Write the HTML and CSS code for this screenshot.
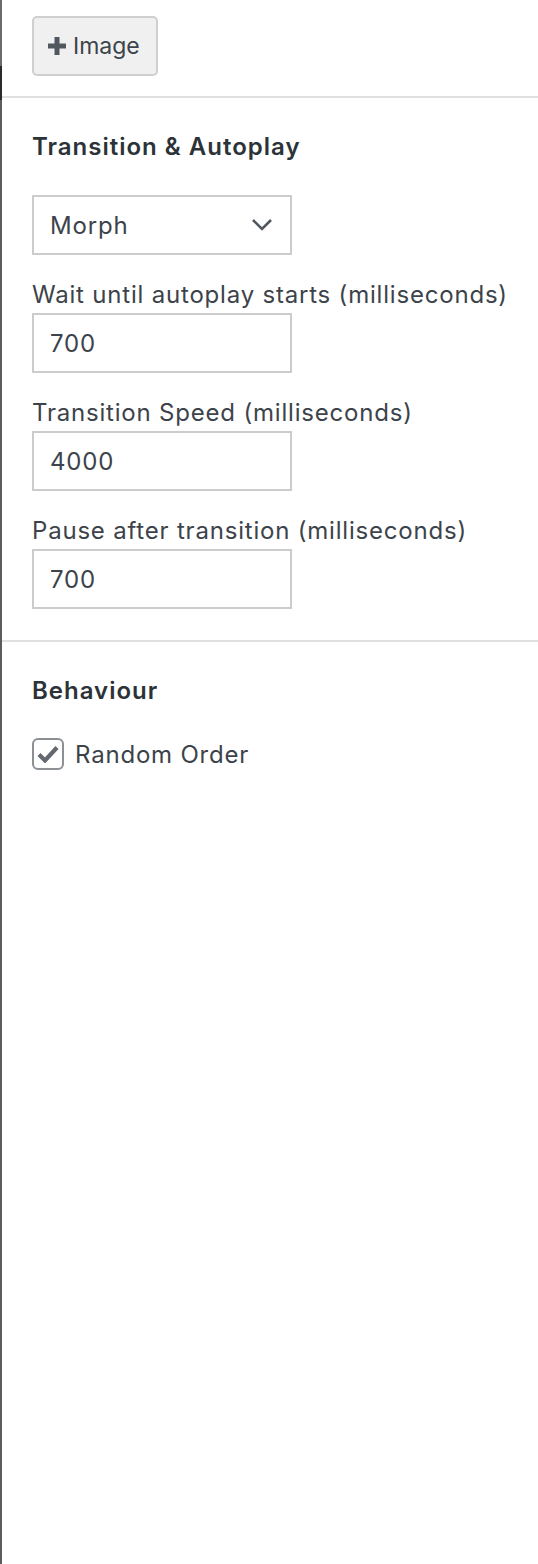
FILE: index.html
```html
<!DOCTYPE html>
<html>
<head>
<meta charset="utf-8">
<link rel="stylesheet" href="styles.css">
</head>
<body>
<div class="frame">
  <div class="edge">
    <div class="edge-top"></div>
    <div class="edge-dark"></div>
    <div class="edge-rest"></div>
  </div>
  <div class="panel">
    <section class="block block-top">
      <button class="btn" type="button">
        <svg class="plus" width="18" height="18" viewBox="0 0 18 18"><path d="M6.5 0h5v6.5H18v5h-6.5V18h-5v-6.5H0v-5h6.5z" fill="#50575e"/></svg>
        <span>Image</span>
      </button>
    </section>
    <section class="block">
      <h2 class="heading">Transition &amp; Autoplay</h2>
      <div class="select">
        <span>Morph</span>
        <svg class="chev" width="22" height="14" viewBox="0 0 22 14"><path d="M2 2l9 9 9-9" fill="none" stroke="#50575e" stroke-width="2.6"/></svg>
      </div>
      <div class="field">
        <label class="label">Wait until autoplay starts (milliseconds)</label>
        <div class="input">700</div>
      </div>
      <div class="field">
        <label class="label">Transition Speed (milliseconds)</label>
        <div class="input">4000</div>
      </div>
      <div class="field">
        <label class="label">Pause after transition (milliseconds)</label>
        <div class="input">700</div>
      </div>
    </section>
    <section class="block block-last">
      <h2 class="heading">Behaviour</h2>
      <div class="check-row">
        <span class="checkbox">
          <svg width="22" height="18" viewBox="0 0 22 18"><path d="M2 9.5l6 6L20 2.5" fill="none" stroke="#646970" stroke-width="4.2"/></svg>
        </span>
        <span class="check-label">Random Order</span>
      </div>
    </section>
  </div>
</div>
</body>
</html>
```

FILE: styles.css
```css
html, body {
  margin: 0;
  padding: 0;
  background: #fff;
}
.frame {
  display: flex;
  min-height: 1564px;
  font-family: Inter, "Noto Sans", sans-serif;
  color: #3c434a;
  font-size: 24px;
  letter-spacing: 0.8px;
}
.edge {
  width: 2px;
  display: flex;
  flex-direction: column;
  flex-shrink: 0;
}
.edge-top { height: 66px; background: #6a6a6a; }
.edge-dark { height: 34px; background: #2a2a2a; }
.edge-rest { flex: 1; background: #5c5c5c; }
.panel {
  flex: 1;
  display: flex;
  flex-direction: column;
}
.block {
  padding: 0 0 31px 30px;
  border-bottom: 2px solid #e0e0e0;
  display: flex;
  flex-direction: column;
  align-items: flex-start;
}
.block-top {
  padding-top: 16px;
  padding-bottom: 20px;
}
.block-last {
  border-bottom: none;
}
.btn {
  box-sizing: border-box;
  width: 126px;
  height: 60px;
  background: #f0f0f0;
  border: 2px solid #cfcfcf;
  border-radius: 5px;
  display: flex;
  align-items: center;
  gap: 7px;
  padding: 0 0 0 14px;
  font-family: inherit;
  font-size: 23px;
  letter-spacing: 0;
  color: #3c434a;
}
.heading {
  margin: 35px 0 0 0;
  font-size: 24px;
  font-weight: 600;
  color: #2c3338;
  line-height: 28px;
  letter-spacing: 1px;
}
.select, .input {
  box-sizing: border-box;
  width: 260px;
  height: 60px;
  border: 2px solid #cccccc;
  display: flex;
  align-items: center;
  padding: 0 16px;
  color: #3c434a;
}
.select {
  margin-top: 34px;
  justify-content: space-between;
  padding-right: 17px;
}
.field {
  display: flex;
  flex-direction: column;
}
.label {
  margin-top: 25px;
  line-height: 30px;
  margin-bottom: 3px;
}
.check-row {
  margin-top: 33px;
  display: flex;
  align-items: center;
  gap: 11px;
}
.checkbox {
  box-sizing: border-box;
  width: 32px;
  height: 32px;
  border: 2px solid #8c8f94;
  border-radius: 6px;
  display: flex;
  align-items: center;
  justify-content: center;
}
```
